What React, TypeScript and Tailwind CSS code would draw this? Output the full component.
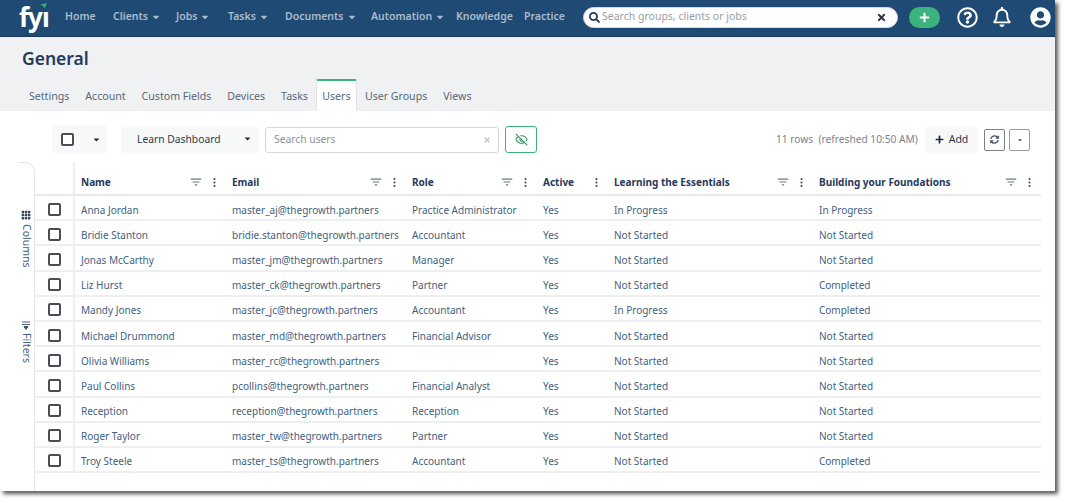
import { BsGrid3X3GapFill, BsThreeDotsVertical } from "react-icons/bs";
import { FaCaretDown, FaPlus, FaRegBell, FaRegQuestionCircle, FaSearch, FaSyncAlt, FaTimes, FaUserCircle } from "react-icons/fa";
import { LuEyeOff } from "react-icons/lu";
import { MdFilterList } from "react-icons/md";

const nav = [
  { label: "Home", w: "w-[48px]" },
  { label: "Clients", caret: true, w: "w-[63px]" },
  { label: "Jobs", caret: true, w: "w-[52px]" },
  { label: "Tasks", caret: true, w: "w-[57px]" },
  { label: "Documents", caret: true, w: "w-[86px]" },
  { label: "Automation", caret: true, w: "w-[85px]" },
  { label: "Knowledge", w: "w-[68px]" },
  { label: "Practice", w: "w-[50px]" },
];

const tabs = ["Settings", "Account", "Custom Fields", "Devices", "Tasks", "Users", "User Groups", "Views"];

const users = [
  ["Anna Jordan", "master_aj@thegrowth.partners", "Practice Administrator", "Yes", "In Progress", "In Progress"],
  ["Bridie Stanton", "bridie.stanton@thegrowth.partners", "Accountant", "Yes", "Not Started", "Not Started"],
  ["Jonas McCarthy", "master_jm@thegrowth.partners", "Manager", "Yes", "Not Started", "Not Started"],
  ["Liz Hurst", "master_ck@thegrowth.partners", "Partner", "Yes", "Not Started", "Completed"],
  ["Mandy Jones", "master_jc@thegrowth.partners", "Accountant", "Yes", "In Progress", "Completed"],
  ["Michael Drummond", "master_md@thegrowth.partners", "Financial Advisor", "Yes", "Not Started", "Not Started"],
  ["Olivia Williams", "master_rc@thegrowth.partners", "", "Yes", "Not Started", "Not Started"],
  ["Paul Collins", "pcollins@thegrowth.partners", "Financial Analyst", "Yes", "Not Started", "Not Started"],
  ["Reception", "reception@thegrowth.partners", "Reception", "Yes", "Not Started", "Not Started"],
  ["Roger Taylor", "master_tw@thegrowth.partners", "Partner", "Yes", "Not Started", "Not Started"],
  ["Troy Steele", "master_ts@thegrowth.partners", "Accountant", "Yes", "Not Started", "Completed"],
];

const gridCols = "grid grid-cols-[40px_151px_180px_131px_71px_205px_222px]";

function Checkbox({ className = "" }: { className?: string }) {
  return <span className={`block h-[13px] w-[13px] rounded-[2px] border-2 border-[#4a4d55] bg-white ${className}`} />;
}

function HeaderCell({ label, filter = true, dotsRight = 6 }: { label: string; filter?: boolean; dotsRight?: number }) {
  return (
    <div className="flex h-full items-center pt-[8px] pl-[6px] text-[10px] font-bold text-[#1f3a5c]">
      <span className="flex-1 whitespace-nowrap">{label}</span>
      {filter ? <MdFilterList className="mr-[6px] text-[14px] text-[#6b7888]" /> : null}
      <BsThreeDotsVertical className="text-[11px] text-[#33475f]" style={{ marginRight: dotsRight }} />
    </div>
  );
}

export default function App() {
  return (
    <div className="h-[503px] w-[1067px] overflow-hidden bg-white font-['Noto_Sans','Open_Sans',sans-serif]">
      <div className="h-[491px] w-[1055px] bg-white shadow-[3px_3px_4px_rgba(0,0,0,0.65)]">
        <header className="flex h-[37px] items-center border-b border-[#17395a] bg-[#1f4a73] pb-[2px]">
          <div className="relative ml-[19px] w-[46px] text-[26px] leading-none font-bold tracking-[-1px] text-white">
            fyı
            <svg viewBox="0 0 10 8" className="absolute top-[-1px] left-[21px] h-[6px] w-[7px]">
              <path d="M0 2 10 0 6 8 5 4Z" fill="#3cb37f" />
            </svg>
          </div>
          <nav className="flex items-center text-[10.5px] font-semibold text-[#a9bccf]">
            {nav.map((item) => (
              <div key={item.label} className={`flex items-center gap-[3px] ${item.w}`}>
                <span>{item.label}</span>
                {item.caret ? <FaCaretDown className="text-[10px]" /> : null}
              </div>
            ))}
          </nav>
          <div className="ml-[9px] flex h-[21px] w-[315px] items-center rounded-full border border-[#d5d9de] bg-white pr-[10px] pl-[5px]">
            <FaSearch className="text-[11px] text-[#1f3a5c]" />
            <span className="ml-[2px] flex-1 text-[10.5px] text-[#9a9ea5]">Search groups, clients or jobs</span>
            <FaTimes className="text-[11px] text-[#2a3442]" />
          </div>
          <div className="ml-[11px] flex h-[21px] w-[31px] items-center justify-center rounded-full bg-[#3cb37f]">
            <FaPlus className="text-[11px] text-white" />
          </div>
          <FaRegQuestionCircle className="ml-[17px] text-[21px] text-white" />
          <FaRegBell className="ml-[14px] text-[20px] text-white" />
          <FaUserCircle className="ml-[18px] text-[21px] text-white" />
        </header>

        <div className="h-[74px] bg-[#f0f1f3]">
          <h1 className="pt-[9px] pl-[22px] text-[17.5px] leading-[25px] font-semibold text-[#1f3a5c]">General</h1>
          <div className="mt-[8px] flex items-end pl-[21px] text-[10.6px] text-[#566779]">
            {tabs.map((tab) =>
              tab === "Users" ? (
                <div
                  key={tab}
                  className="flex h-[32px] w-[41px] items-center justify-center rounded-t-[2px] border-x border-t-2 border-x-[#e2e4e7] border-t-[#3cb37f] bg-white pt-[2px]"
                >
                  {tab}
                </div>
              ) : (
                <div key={tab} className="flex h-[30px] items-center px-[8px] pt-[1px]">
                  {tab}
                </div>
              ),
            )}
          </div>
        </div>

        <main className="ml-[5px] bg-white">
          <div className="flex h-[51px] items-center pt-[6px]">
            <div className="ml-[47px] flex h-[27px] w-[55px] items-center rounded-[3px] bg-[#f7f8f8]">
              <Checkbox className="ml-[9px]" />
              <FaCaretDown className="ml-[18px] text-[9px] text-[#1f2a38]" />
            </div>
            <div className="ml-[14px] flex h-[26px] w-[138px] items-center justify-between rounded-[3px] bg-[#f7f8f8] pr-[7px] pl-[16px] text-[10.3px] text-[#2c3a4b]">
              <span>Learn Dashboard</span>
              <FaCaretDown className="mb-[3px] text-[9px] text-[#1f2a38]" />
            </div>
            <div className="ml-[6px] flex h-[26px] w-[234px] items-center justify-between rounded-[3px] border border-[#d4d6d9] pr-[7px] pl-[8px] text-[10.3px] text-[#8d9298]">
              <span>Search users</span>
              <FaTimes className="text-[8px] text-[#c3c6ca]" />
            </div>
            <div className="ml-[6px] flex h-[27px] w-[32px] items-center justify-center rounded-[3px] border border-[#3cb37f]">
              <LuEyeOff className="text-[13px] text-[#3a8f63]" />
            </div>
            <span className="ml-[239px] w-[142px] text-[10.2px] whitespace-pre text-[#7b828b]">11 rows  (refreshed 10:50 AM)</span>
            <div className="ml-[7px] flex h-[26px] w-[53px] items-center justify-center gap-[5px] rounded-[3px] bg-[#f7f8f8] text-[10.5px] text-[#2c3a4b]">
              <FaPlus className="text-[9px] text-[#1f2a38]" />
              <span>Add</span>
            </div>
            <div className="ml-[6px] flex h-[22px] w-[21px] items-center justify-center rounded-[2px] border border-[#7d8087]">
              <FaSyncAlt className="text-[9px] text-[#4a5361]" />
            </div>
            <div className="ml-[4px] flex h-[22px] w-[21px] items-center justify-center rounded-[2px] border border-[#9a9da2]">
              <FaCaretDown className="text-[6px] text-[#4a5361]" />
            </div>
          </div>

          <div className="flex h-[329px]">
            <aside className="ml-[13px] w-[17px] rounded-tr-[10px] border-t border-r border-[#e6e7e9] text-[10.5px] text-[#3f5f80]">
              <div className="mt-[47px] flex flex-col items-center">
                <BsGrid3X3GapFill className="text-[10px] text-[#33475f]" />
                <span className="mt-[4px] [writing-mode:vertical-lr]">Columns</span>
              </div>
              <div className="mt-[52px] flex flex-col items-center">
                <svg viewBox="0 0 10 10" className="h-[10px] w-[10px] rotate-90 text-[#33475f]">
                  <path d="M2 1v8M4.5 1v8M6.5 3l3 2-3 2Z" fill="currentColor" stroke="currentColor" strokeWidth="0.9" />
                </svg>
                <span className="mt-[3px] [writing-mode:vertical-lr]">Filters</span>
              </div>
            </aside>

            <div className="w-[1006px]">
              <div className={`${gridCols} h-[34px] border-b-2 border-[#e8e9eb]`}>
                <div className="border-r-2 border-[#eeeff0]" />
                <HeaderCell label="Name" />
                <HeaderCell label="Email" />
                <HeaderCell label="Role" />
                <HeaderCell label="Active" filter={false} />
                <HeaderCell label="Learning the Essentials" />
                <HeaderCell label="Building your Foundations" dotsRight={0} />
              </div>
              {users.map((user) => (
                <div key={user[0]} className={`${gridCols} h-[25.2px] border-b-2 border-[#eeeff0] text-[10px] text-[#3f5f80]`}>
                  <div className="flex items-center justify-center border-r-2 border-[#eeeff0] pt-[3px]">
                    <Checkbox />
                  </div>
                  {user.map((value, i) => (
                    <div key={i} className="flex items-center pt-[5px] pl-[6px] whitespace-nowrap">
                      {value}
                    </div>
                  ))}
                </div>
              ))}
            </div>
          </div>
        </main>
      </div>
    </div>
  );
}
